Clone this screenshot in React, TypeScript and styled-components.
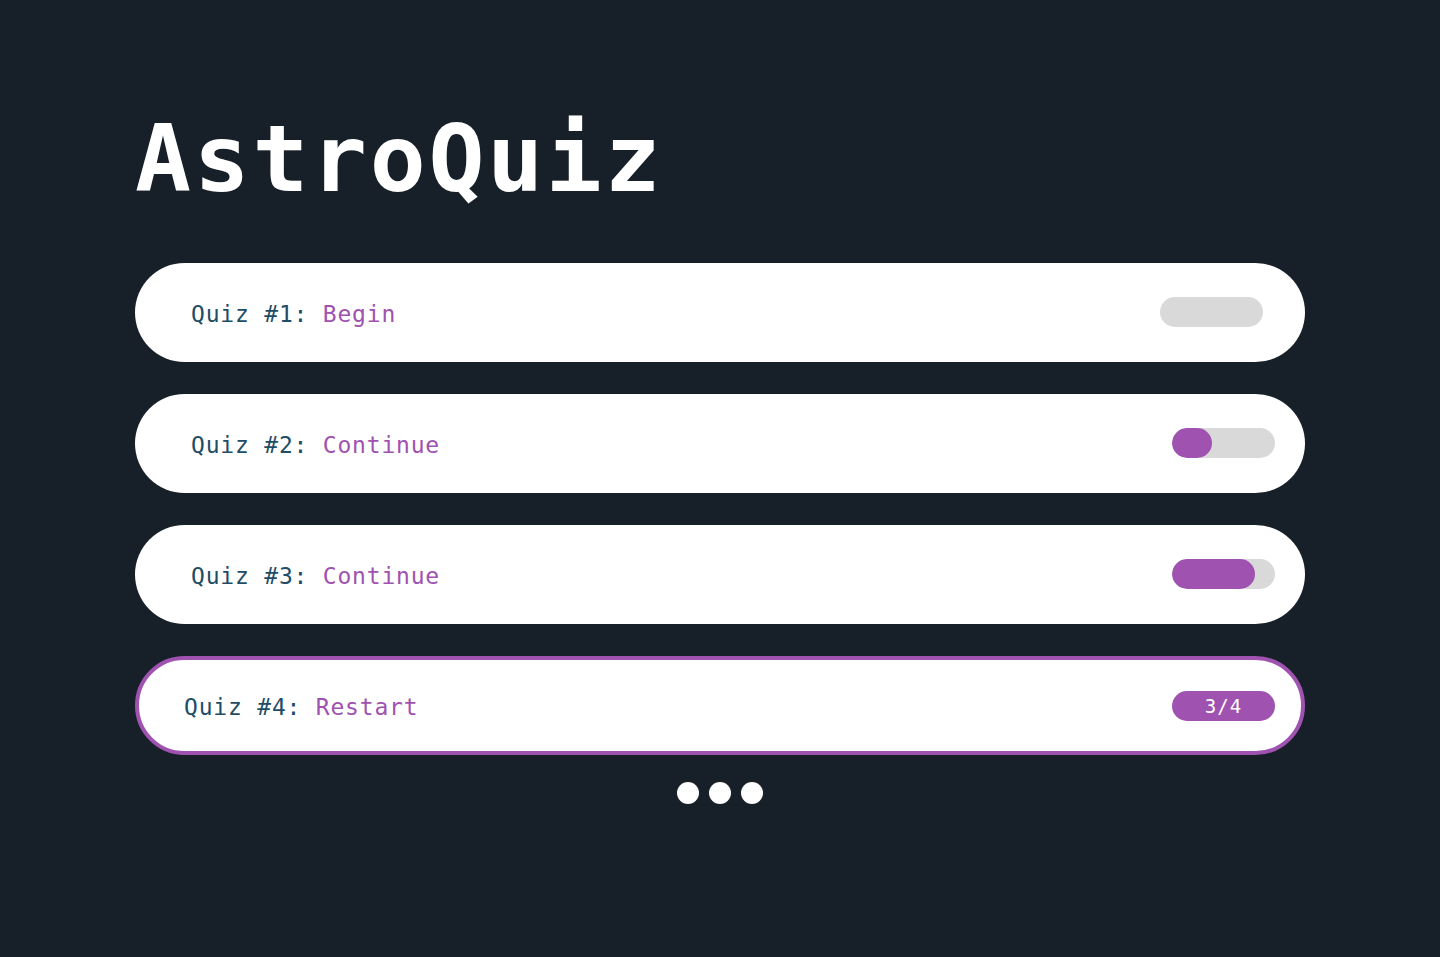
import React from "react";
import styled, { createGlobalStyle } from "styled-components";

const Global = createGlobalStyle`
  html, body { margin: 0; padding: 0; background: #171f28; }
  body { font-family: "DejaVu Sans Mono", "Liberation Mono", monospace; }
`;

const Page = styled.main`
  min-height: 957px;
  box-sizing: border-box;
  padding: 104px 135px 0 135px;
  display: flex;
  flex-direction: column;
`;

const Title = styled.h1`
  margin: 0 0 49px 0;
  font-family: "DejaVu Sans Mono", monospace;
  font-weight: 700;
  font-size: 93px;
  line-height: 110px;
  color: #ffffff;
  letter-spacing: 2.7px;
`;

const List = styled.div`
  display: flex;
  flex-direction: column;
  gap: 32px;
`;

const Row = styled.div<{ $active?: boolean }>`
  box-sizing: border-box;
  height: 99px;
  border-radius: 50px;
  background: #ffffff;
  border: ${(p) => (p.$active ? "4px solid #a052b0" : "none")};
  display: flex;
  align-items: center;
  justify-content: space-between;
  padding: ${(p) => (p.$active ? "0 26px 0 45px" : "0 30px 0 56px")};
`;

const Label = styled.div`
  font-family: "DejaVu Sans Mono", monospace;
  font-size: 23px;
  color: #1f4d66;
  white-space: pre;
  letter-spacing: 0.8px;
  padding-top: 2px;
`;

const Action = styled.span`
  color: #a052b0;
`;

const Track = styled.div<{ $shift?: number }>`
  position: relative;
  width: 103px;
  height: 30px;
  border-radius: 15px;
  background: #d9d9d9;
  margin-right: ${(p) => p.$shift ?? 0}px;
  margin-bottom: 1px;
  overflow: hidden;
`;

const Fill = styled.div`
  height: 100%;
  border-radius: 15px;
  background: #a052b0;
`;

const Badge = styled.div`
  width: 103px;
  height: 30px;
  border-radius: 15px;
  background: #a052b0;
  color: #ffffff;
  display: flex;
  align-items: center;
  justify-content: center;
  font-family: "DejaVu Sans Mono", monospace;
  font-size: 19px;
  letter-spacing: 1px;
`;

const Dots = styled.div`
  display: flex;
  justify-content: center;
  gap: 10px;
  margin-top: 27px;
`;

const Dot = styled.span`
  width: 22px;
  height: 22px;
  border-radius: 50%;
  background: #ffffff;
`;

const quizzes = [
  { n: 1, action: "Begin", fill: 0, shift: 12 },
  { n: 2, action: "Continue", fill: 40, shift: 0 },
  { n: 3, action: "Continue", fill: 83, shift: 0 },
];

export default function App() {
  return (
    <>
      <Global />
      <Page>
        <Title>AstroQuiz</Title>
        <List>
          {quizzes.map((q) => (
            <Row key={q.n}>
              <Label>
                {`Quiz #${q.n}: `}
                <Action>{q.action}</Action>
              </Label>
              <Track $shift={q.shift}>
                {q.fill > 0 && <Fill style={{ width: `${q.fill}px` }} />}
              </Track>
            </Row>
          ))}
          <Row $active>
            <Label>
              {"Quiz #4: "}
              <Action>Restart</Action>
            </Label>
            <Badge>3/4</Badge>
          </Row>
        </List>
        <Dots>
          <Dot />
          <Dot />
          <Dot />
        </Dots>
      </Page>
    </>
  );
}
